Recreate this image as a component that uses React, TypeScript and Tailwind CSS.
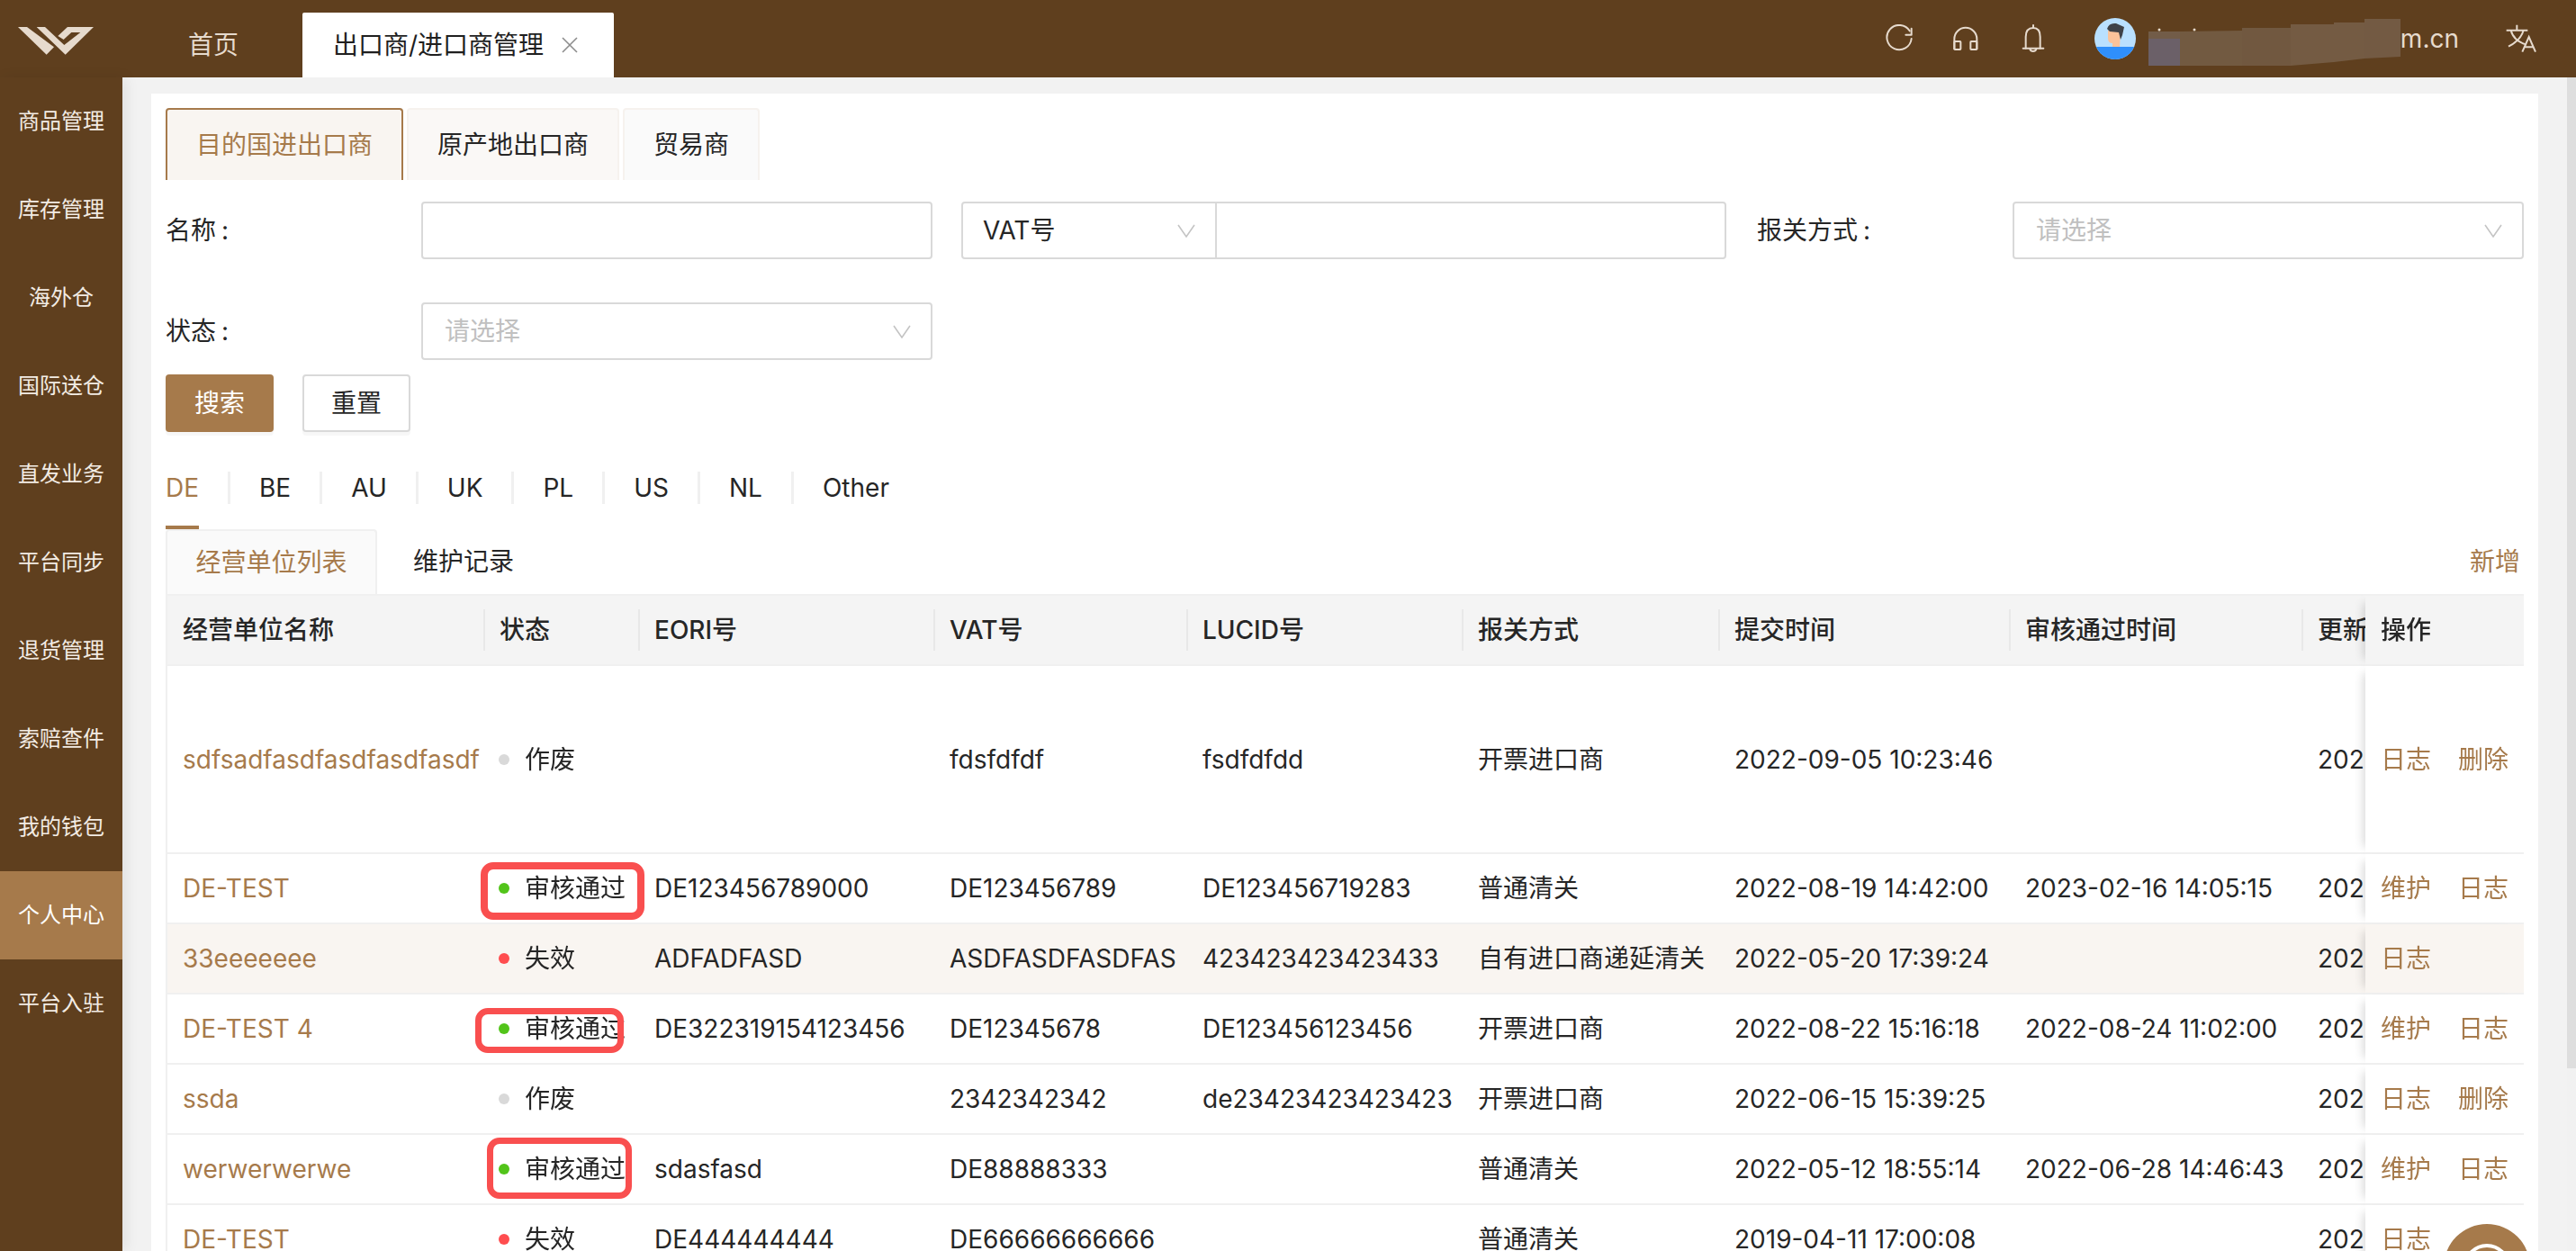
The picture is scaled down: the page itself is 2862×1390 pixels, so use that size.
import React from "react";

const FONT = "font-['Inter','Noto_Sans_CJK_SC',sans-serif]";

const MENU = ["商品管理", "库存管理", "海外仓", "国际送仓", "直发业务", "平台同步", "退货管理", "索赔查件", "我的钱包", "个人中心", "平台入驻"];
const COUNTRIES = ["DE", "BE", "AU", "UK", "PL", "US", "NL", "Other"];
const HEAD = ["经营单位名称", "状态", "EORI号", "VAT号", "LUCID号", "报关方式", "提交时间", "审核通过时间", "更新时间"];
const COL_W = ["w-[351px]", "w-[172px]", "w-[328px]", "w-[281px]", "w-[306px]", "w-[285px]", "w-[323px]", "w-[325px]", "w-[300px]"];

type Row = {
  name: string;
  status: "作废" | "审核通过" | "失效";
  eori: string;
  vat: string;
  lucid: string;
  customs: string;
  submitted: string;
  approved: string;
  actions: string[];
  tall?: boolean;
  hot?: boolean;
  mark?: 1 | 2 | 3;
};

const ROWS: Row[] = [
  { name: "sdfsadfasdfasdfasdfasdf", status: "作废", eori: "", vat: "fdsfdfdf", lucid: "fsdfdfdd", customs: "开票进口商", submitted: "2022-09-05 10:23:46", approved: "", actions: ["日志", "删除"], tall: true },
  { name: "DE-TEST", status: "审核通过", eori: "DE123456789000", vat: "DE123456789", lucid: "DE123456719283", customs: "普通清关", submitted: "2022-08-19 14:42:00", approved: "2023-02-16 14:05:15", actions: ["维护", "日志"], mark: 1 },
  { name: "33eeeeeee", status: "失效", eori: "ADFADFASD", vat: "ASDFASDFASDFAS", lucid: "423423423423433", customs: "自有进口商递延清关", submitted: "2022-05-20 17:39:24", approved: "", actions: ["日志"], hot: true },
  { name: "DE-TEST 4", status: "审核通过", eori: "DE322319154123456", vat: "DE12345678", lucid: "DE123456123456", customs: "开票进口商", submitted: "2022-08-22 15:16:18", approved: "2022-08-24 11:02:00", actions: ["维护", "日志"], mark: 2 },
  { name: "ssda", status: "作废", eori: "", vat: "2342342342", lucid: "de23423423423423", customs: "开票进口商", submitted: "2022-06-15 15:39:25", approved: "", actions: ["日志", "删除"] },
  { name: "werwerwerwe", status: "审核通过", eori: "sdasfasd", vat: "DE88888333", lucid: "", customs: "普通清关", submitted: "2022-05-12 18:55:14", approved: "2022-06-28 14:46:43", actions: ["维护", "日志"], mark: 3 },
  { name: "DE-TEST", status: "失效", eori: "DE444444444", vat: "DE66666666666", lucid: "", customs: "普通清关", submitted: "2019-04-11 17:00:08", approved: "", actions: ["日志"] },
];

function Logo() {
  return (
    <svg width="136" height="86" viewBox="0 0 408 258" fill="#e6dacd">
      <polygon points="60,90 90,90 180,157 155,182" />
      <polygon points="122,90 150,90 214,150 268,108 238,108 212,132 193,120 225,90 312,90 218,182" />
    </svg>
  );
}

function Chevron() {
  return (
    <svg width="20" height="15" viewBox="0 0 20 15" fill="none" stroke="#c4c4c4" strokeWidth="1.6">
      <polyline points="1,1 10,14 19,1" />
    </svg>
  );
}

function Field({ label, children, className = "" }: { label: string; children?: React.ReactNode; className?: string }) {
  return (
    <div className={`flex items-center h-16 ${className}`}>
      <div className="w-[284px] shrink-0 text-[28px] text-[#262626]">
        {label}<span className="ml-[6px]">:</span>
      </div>
      {children}
    </div>
  );
}

function SelectBox() {
  return (
    <div className="flex-1 h-16 border-2 border-[#d9d9d9] rounded bg-white flex items-center justify-between pl-[24px] pr-[22px]">
      <span className="text-[28px] text-[#c0c0c0]">请选择</span>
      <Chevron />
    </div>
  );
}

function Status({ s }: { s: Row["status"] }) {
  const dot = s === "作废" ? "bg-[#d9d9d9]" : s === "失效" ? "bg-[#ff4d4f]" : "bg-[#52c41a]";
  return (
    <span className="flex items-center whitespace-nowrap">
      <span className={`w-3 h-3 rounded-full ${dot} mr-[17px]`} />
      {s}
    </span>
  );
}

function Mark({ n }: { n?: 1 | 2 | 3 }) {
  if (n === 1) return <div className="absolute left-[-3px] top-[9px] w-[182px] h-[64px] border-[8px] border-[#f94f4f] rounded-[14px]" />;
  if (n === 2) return <div className="absolute left-[-9px] top-[15px] w-[165px] h-[50px] border-[7px] border-[#f94f4f] rounded-[14px]" />;
  if (n === 3) return <div className="absolute left-[4px] top-[3px] w-[161px] h-[68px] border-[7px] border-[#f94f4f] rounded-[14px]" />;
  return null;
}

export default function App() {
  return (
    <div className={`${FONT} w-full h-screen overflow-hidden flex flex-col bg-[#f2f2f2] text-[#262626]`}>
      {/* top bar */}
      <header className="h-[86px] shrink-0 bg-[#5f3f1e] flex items-end">
        <div className="w-[136px] h-[86px] shrink-0"><Logo /></div>
        <div className="h-[72px] flex items-center ml-[73px] text-[28px] text-[#e6dacd]">
          <span className="mr-[71px]">首页</span>
        </div>
        <div className="h-[72px] w-[346px] bg-white rounded-t-[2px] flex items-center pl-[34px] text-[28px] text-[#1f1f1f] whitespace-nowrap">
          出口商/进口商管理
          <svg className="ml-[20px]" width="18" height="18" viewBox="0 0 18 18" stroke="#8c8c8c" strokeWidth="1.6">
            <path d="M1 1 L17 17 M17 1 L1 17" />
          </svg>
        </div>
        <div className="flex-1" />
        <div className="h-[86px] flex items-center pr-[44px] text-[28px] text-[#e6dacd]">
          <svg width="32" height="32" viewBox="50 40 96 96" fill="none" stroke="#e6dacd" strokeWidth="6" strokeLinecap="round" strokeLinejoin="round">
            <path d="M133 62 A41 41 0 1 0 139 88" />
            <path d="M139 54 V75 H120" />
          </svg>
          <svg className="ml-[43px]" width="30" height="30" viewBox="282 44 90 90" fill="none" stroke="#e6dacd" strokeWidth="6" strokeLinejoin="round">
            <path d="M289 125 V90 A37 37 0 0 1 364 90 V125" />
            <rect x="289" y="98" width="21" height="27" rx="2" />
            <rect x="343" y="98" width="21" height="27" rx="2" />
          </svg>
          <svg className="ml-[47px]" width="26" height="32" viewBox="516 40 78 96" fill="none" stroke="#e6dacd" strokeWidth="6" strokeLinecap="round">
            <path d="M530 120 V82 Q530 52 555 52 Q578 52 578 82 V120" />
            <path d="M521 120 H589 M555 43 V52" />
            <path d="M544 123 A11 10 0 0 0 565 123" />
          </svg>
          <svg className="ml-[55px]" width="46" height="46" viewBox="0 0 46 46">
            <defs>
              <clipPath id="av"><circle cx="23" cy="23" r="23" /></clipPath>
            </defs>
            <g clipPath="url(#av)">
              <rect width="46" height="46" fill="#b9e0ff" />
              <path d="M15 14 L29 14 L28 33 L20 33 L20 28 Q15 28 15 22 Z" fill="#fcc39a" />
              <path d="M14 12 Q16 5 24 6 L33 10 L31 19 L29 24 L27 16 L17 15 Z" fill="#3f4248" />
              <rect x="0" y="32" width="46" height="14" fill="#2f8ffb" />
            </g>
          </svg>
          <div className="relative ml-[14px] w-[280px] h-[60px] shrink-0">
            <svg className="absolute inset-0" width="280" height="60" viewBox="0 0 280 60">
              <circle cx="12" cy="20" r="1.5" fill="#e6dacd" />
              <circle cx="51" cy="20" r="1.5" fill="#e6dacd" />
              <rect x="0" y="22" width="35" height="40" fill="#6b6068" />
              <rect x="0" y="22" width="35" height="8" fill="#725c48" />
              <polygon points="35,22 104,21 104,60 35,62" fill="#725a41" />
              <polygon points="104,18 158,18 158,60 104,60" fill="#715840" />
              <polygon points="158,14 206,14 206,56 158,60" fill="#745b43" />
              <polygon points="206,12 240,12 240,52 206,56" fill="#745b43" />
              <polygon points="240,8 280,8 280,50 240,52" fill="#735a43" />
            </svg>
          </div>
          <span>m.cn</span>
          <svg className="ml-[52px]" width="34" height="32" viewBox="1155 42 102 96" fill="none" stroke="#e6dacd" strokeWidth="6">
            <path d="M1157 62 H1228 M1192 44 V62 M1172 62 Q1180 96 1224 110 M1214 62 Q1204 96 1164 116" />
            <path d="M1210 134 L1232 84 L1254 134 M1217 118 H1247" />
          </svg>
        </div>
      </header>

      <div className="flex-1 flex min-h-0">
        {/* left menu */}
        <nav className="w-[136px] shrink-0 bg-[#5f3f1e] shadow-[4px_0_14px_rgba(0,0,0,0.08)] z-10">
          {MENU.map((m) => (
            <div key={m} className={`h-[98px] flex items-center justify-center text-[24px] text-[#f3ece4] ${m === "个人中心" ? "bg-[#a67a4b] text-white" : ""}`}>
              {m}
            </div>
          ))}
        </nav>

        {/* page */}
        <main className="flex-1 min-w-0 pt-[18px] pl-[32px] pr-[32px] overflow-hidden">
          <div className="bg-white px-[16px] pt-[16px] h-[2000px]">
            {/* type tabs */}
            <div className="flex gap-[4px] items-end text-[28px]">
              <div className="w-[264px] h-[80px] flex items-center justify-center bg-[#f9f5f1] border-2 border-b-0 border-[#a67a4b] rounded-t text-[#a67a4b]">目的国进出口商</div>
              <div className="w-[236px] h-[80px] flex items-center justify-center bg-[#faf8f6] border-2 border-b-0 border-[#f6f2ee] rounded-t">原产地出口商</div>
              <div className="w-[152px] h-[80px] flex items-center justify-center bg-[#fafafa] border-2 border-b-0 border-[#f6f2ee] rounded-t">贸易商</div>
            </div>

            {/* search form */}
            <div className="mt-[24px] grid grid-cols-[852px_852px_852px] gap-x-[32px] gap-y-[48px]">
              <Field label="名称">
                <div className="flex-1 h-16 border-2 border-[#d9d9d9] rounded bg-white" />
              </Field>
              <div className="flex h-16 w-[850px] border-2 border-[#d9d9d9] rounded">
                <div className="w-[282px] border-r-2 border-[#d9d9d9] flex items-center justify-between pl-[22px] pr-[22px] text-[28px]">
                  <span>VAT号</span>
                  <Chevron />
                </div>
              </div>
              <Field label="报关方式">
                <SelectBox />
              </Field>
              <Field label="状态">
                <SelectBox />
              </Field>
            </div>

            {/* buttons */}
            <div className="mt-[16px] flex gap-[32px] text-[28px]">
              <button className="w-[120px] h-16 rounded bg-[#a67a4b] text-white shadow-[0_4px_0_rgba(0,0,0,0.03)]">搜索</button>
              <button className="w-[120px] h-16 rounded bg-white border-2 border-[#d9d9d9] text-[#262626] shadow-[0_4px_0_rgba(0,0,0,0.03)]">重置</button>
            </div>

            {/* country tabs */}
            <div className="mt-[44px] flex items-start text-[28px] leading-[36px]">
              {COUNTRIES.map((c, i) => (
                <React.Fragment key={c}>
                  <div className={`h-[64px] ${i === 0 ? "border-b-4 border-[#a67a4b] text-[#a67a4b]" : ""}`}>{c}</div>
                  {i < COUNTRIES.length - 1 && <div className="w-[3px] h-[36px] mx-[32px] bg-[#f0f0f0]" />}
                </React.Fragment>
              ))}
            </div>

            {/* sub tabs */}
            <div className="flex items-end h-[74px] border-b-2 border-[#f0f0f0] text-[28px]">
              <div className="w-[235px] h-[72px] flex items-center justify-center bg-[#fafafa] border-2 border-b-0 border-[#f0f0f0] rounded-t text-[#a67a4b]">经营单位列表</div>
              <div className="h-[72px] flex items-center ml-[40px]">维护记录</div>
              <div className="flex-1" />
              <div className="h-[72px] flex items-center pr-[4px] text-[#a67a4b]">新增</div>
            </div>

            {/* table */}
            <div className="overflow-hidden border-l-2 border-[#f0f0f0]">
              <table className="table-fixed border-separate border-spacing-0 w-[2547px] text-[28px]">
                <colgroup>
                  {COL_W.map((w, i) => <col key={i} className={w} />)}
                  <col className="w-[176px]" />
                </colgroup>
                <thead>
                  <tr className="h-[78px] bg-[#f4f4f4]">
                    {HEAD.map((h, i) => (
                      <th key={h} className="p-0 font-medium text-left border-b-2 border-[#f0f0f0] whitespace-nowrap overflow-hidden">
                        <div className={`h-[46px] flex items-center ${i === 0 ? "pl-[17px]" : "pl-[16px] border-l-2 border-[#e8e8e8]"}`}>{h}</div>
                      </th>
                    ))}
                    <th className="sticky right-0 p-0 pl-[17px] font-medium text-left bg-[#f4f4f4] border-b-2 border-[#f0f0f0] shadow-[-10px_0_10px_-8px_rgba(0,0,0,0.16)]">操作</th>
                  </tr>
                </thead>
                <tbody>
                  {ROWS.map((r, idx) => {
                    const bg = r.hot ? "bg-[#f9f5f1]" : "bg-white";
                    const td = "p-0 pl-[18px] border-b-2 border-[#f0f0f0] whitespace-nowrap overflow-hidden";
                    return (
                      <tr key={idx} className={`${r.tall ? "h-[209px]" : "h-[78px]"} ${bg}`}>
                        <td className={`p-0 pl-[17px] border-b-2 border-[#f0f0f0] whitespace-nowrap text-[#a67a4b]`}>{r.name}</td>
                        <td className="relative p-0 pl-[17px] border-b-2 border-[#f0f0f0]">
                          <Status s={r.status} />
                          <Mark n={r.mark} />
                        </td>
                        <td className={td}>{r.eori}</td>
                        <td className={td}>{r.vat}</td>
                        <td className={td}>{r.lucid}</td>
                        <td className={td}>{r.customs}</td>
                        <td className={td}>{r.submitted}</td>
                        <td className={td}>{r.approved}</td>
                        <td className={td}>2022-09-05 10:23:46</td>
                        <td className={`sticky right-0 p-0 ${bg} border-b-2 border-[#f0f0f0] shadow-[-10px_0_10px_-8px_rgba(0,0,0,0.16)]`}>
                          <div className="flex justify-between pl-[17px] pr-[17px] text-[#a67a4b]">
                            {r.actions.map((a) => <span key={a}>{a}</span>)}
                          </div>
                        </td>
                      </tr>
                    );
                  })}
                </tbody>
              </table>
            </div>
          </div>
        </main>

        {/* page scrollbar */}
        <div className="w-[10px] shrink-0 bg-[#f1f1f1]">
          <div className="h-[1101px] bg-[#dedede]" />
        </div>
      </div>

      {/* floating help */}
      <button className="fixed left-[2715px] bottom-[-66px] w-[96px] h-[96px] rounded-full bg-[#a67a4b] flex items-center justify-center z-20">
        <svg width="56" height="56" viewBox="0 0 56 56" fill="none" stroke="white" strokeWidth="4">
          <circle cx="28" cy="28" r="24" />
        </svg>
      </button>
    </div>
  );
}
